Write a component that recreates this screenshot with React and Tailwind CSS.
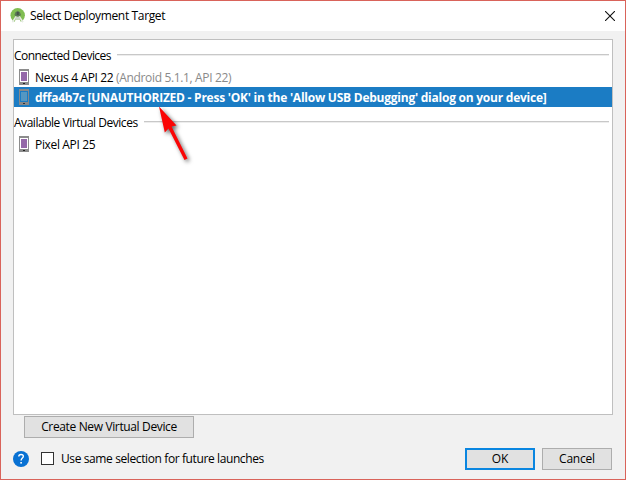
import React from "react";

function Phone({ selected }) {
  return (
    <svg width="10" height="16" viewBox="0 0 10 16" shapeRendering="crispEdges" className="shrink-0">
      <rect width="10" height="16" fill={selected ? "#86898b" : "#8c8c8c"} />
      <rect x="1" y="2" width="8" height="11" fill={selected ? "#1b7cc4" : "#ffffff"} />
      <rect x="2" y="3" width="6" height="9" fill={selected ? "#5497c2" : "#9468a8"} />
      <rect x="4" y="14" width="2" height="1" fill={selected ? "#26333c" : "#222222"} />
    </svg>
  );
}

function StudioLogo() {
  return (
    <svg width="16" height="16" viewBox="0 0 16 16" className="shrink-0">
      <circle cx="7.700" cy="7.300" r="7.200" fill="#80bd52" />
      <path d="M4.400 7 5.400 4.200 7.700 2.800 10 4.200 11 7 9.200 8.800H6.200z" fill="#5b7a55" />
      <rect x="6.800" y="4" width="2" height="3" fill="#46514a" />
      <path d="M6.200 8.400 2.400 14.200M9.200 8.400l3.800 5.800" stroke="#e6ebe4" strokeWidth="1.600" fill="none" />
      <path d="M3.800 15.200 5.700 11.500h4l1.900 3.700z" fill="#ffffff" />
      <path d="M6 8.800h3.400l.9 2.700H5.100z" fill="#c9d2c5" />
    </svg>
  );
}

function SectionTitle({ label, tracking }) {
  return (
    <div className="flex h-[27px] items-center pr-[3px] pt-[3px]">
      <span className={tracking}>{label}</span>
      <div className="ml-[6px] h-[2px] flex-1 border-t border-[#c8c8c8] bg-[#ededed]" />
    </div>
  );
}

function Device({ selected, children }) {
  return (
    <div className={"flex h-5 items-center gap-[6px] pl-[5px] " + (selected ? "bg-[#1b7cc4] font-bold text-white" : "")}>
      <Phone selected={selected} />
      {children}
    </div>
  );
}

export default function App() {
  return (
    <div className="flex h-[480px] w-[626px] flex-col whitespace-nowrap border border-[#d9635a] bg-[#f1f1f1] font-['Open_Sans','Noto_Sans',sans-serif] text-[12px] leading-4 text-black">
      <header className="flex h-[30px] shrink-0 items-center bg-white pl-[9px] pr-[10px]">
        <StudioLogo />
        <span className="ml-1 tracking-[-0.35px]">Select Deployment Target</span>
        <svg className="ml-auto" width="10" height="10" viewBox="0 0 10 10">
          <path d="M0 0 10 10M10 0 0 10" stroke="#111" strokeWidth="1.1" />
        </svg>
      </header>

      <main className="mx-3 mt-2 h-[376px] shrink-0 border border-[#bfbfbf] bg-white">
        <SectionTitle label="Connected Devices" tracking="pt-px tracking-[-0.54px]" />
        <Device>
          <span className="pt-[2px] tracking-[-0.35px]">
            Nexus 4 API 22 <span className="text-[#8a8a8a]">(Android 5.1.1, API 22)</span>
          </span>
        </Device>
        <div className="relative">
          <Device selected>
            <span className="pt-[2px] tracking-[-0.24px]">
              dffa4b7c [UNAUTHORIZED - Press 'OK' in the 'Allow USB Debugging' dialog on your device]
            </span>
          </Device>
          <svg className="absolute left-[136px] top-[14px] drop-shadow-[2px_2px_2px_rgba(0,0,0,0.6)]" width="50" height="65" viewBox="150 101 50 65">
            <path d="M159 106.500 176.500 125.500 171.500 126.500 187.500 158.500 184.500 160 168.500 128.500 164.800 132.500z" fill="#fa0505" />
          </svg>
        </div>
        <SectionTitle label="Available Virtual Devices" tracking="pt-px tracking-[-0.47px]" />
        <Device>
          <span className="pt-[2px] tracking-[-0.34px]">Pixel API 25</span>
        </Device>
      </main>

      <button className="ml-[23px] mt-[1px] h-[22px] w-[170px] shrink-0 border border-[#adadad] bg-[#e1e1e1] leading-[20px] tracking-[-0.36px]">
        Create New Virtual Device
      </button>

      <footer className="mt-[10px] flex h-[22px] items-center pl-3 pr-[13px]">
        <svg width="16" height="16" viewBox="0 0 16 16" className="shrink-0">
          <circle cx="8" cy="8" r="8" fill="#0871d3" />
          <path d="M5.800 5.500q0-2 2.300-2t2.200 2c0 1.500-2.200 1.800-2.200 4" fill="none" stroke="#fff" strokeWidth="1.400" />
          <rect x="7.300" y="11" width="1.600" height="1.600" fill="#fff" />
        </svg>
        <span className="ml-3 size-[13px] -translate-y-px border border-[#333] bg-white" />
        <span className="ml-[7px] tracking-[-0.39px]">Use same selection for future launches</span>
        <button className="ml-auto h-[22px] w-[70px] border-2 border-[#0a86e0] bg-[#e1e1e1] leading-[18px]">OK</button>
        <button className="ml-[7px] h-[22px] w-[70px] border border-[#adadad] bg-[#e1e1e1] leading-[20px] tracking-[-0.2px]">Cancel</button>
      </footer>
    </div>
  );
}
